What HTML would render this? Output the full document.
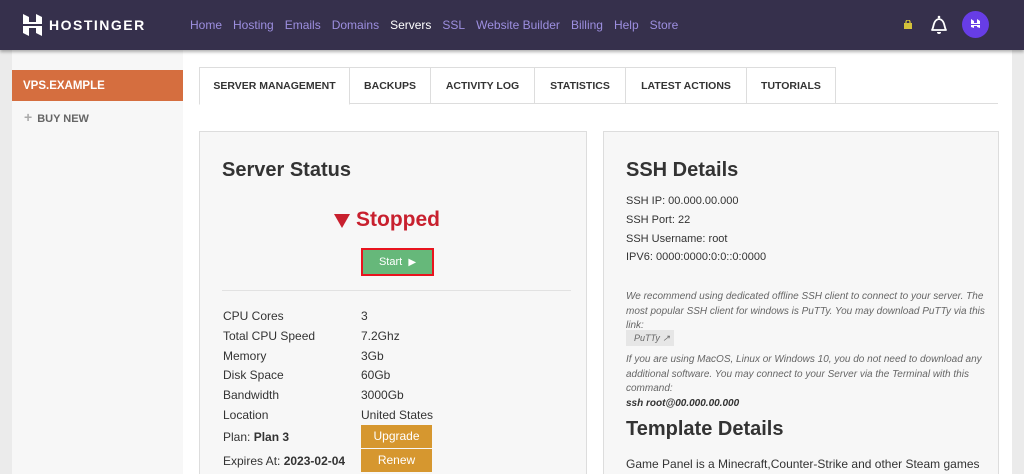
<!DOCTYPE html>
<html style="width:1024px;height:474px;overflow:hidden"><head><meta charset="utf-8"><style>
*{box-sizing:border-box;margin:0;padding:0}
body{width:1024px;height:474px;overflow:hidden;background:#ebebeb;font-family:"Liberation Sans",sans-serif;position:relative;color:#333}
.hdr{position:absolute;left:0;top:0;width:1024px;height:50px;background:#36304c;box-shadow:0 2px 3px rgba(0,0,0,.3);z-index:3}
.logo{position:absolute;left:23px;top:14px}
.brand{position:absolute;left:49px;top:17px;color:#fff;font-weight:bold;font-size:14px;letter-spacing:1.5px}
.nav{position:absolute;left:190px;top:18px;font-size:12px;color:#9d8fe0;white-space:nowrap}
.nav span{margin-right:11px}
.nav .on{color:#fff}
.side{position:absolute;left:12px;top:50px;width:171px;height:424px;background:#f7f7f7}
.vps{position:absolute;left:12px;top:70px;width:171px;height:31px;background:#d56e3f;color:#fff;font-weight:bold;font-size:11.5px;line-height:33px;padding-left:11px}
.vps:after{content:"";position:absolute;right:-5px;top:0;border-left:5px solid #d56e3f;border-top:15.5px solid transparent;border-bottom:15.5px solid transparent}
.buy{position:absolute;left:24px;top:109px;font-size:11px;font-weight:bold;color:#666}
.buy b{color:#aaa;font-size:14px;margin-right:5px}
.main{position:absolute;left:183px;top:50px;width:829px;height:424px;background:#fff;overflow:hidden}
.tabs{position:absolute;left:199px;top:67px;height:37px;width:799px;border-bottom:1px solid #ddd}
.tab{position:absolute;top:0;height:37px;border:1px solid #ddd;font-size:10.5px;font-weight:bold;color:#333;text-align:center;line-height:36px;background:#fff}
.tab.first{border-bottom-color:#fff;height:38px}
.panel{position:absolute;top:131px;background:#f7f7f7;border:1px solid #ddd;height:360px}
h2{position:absolute;font-size:20px;font-weight:bold;color:#333}
.row{position:absolute;left:23px;font-size:12px;color:#333}
.val{position:absolute;left:161px;font-size:12px;color:#333}
.btn{position:absolute;left:161px;width:71px;height:23px;background:#d6972f;color:#fff;font-size:12px;text-align:center;line-height:23px}
.t{position:absolute;left:22px;font-size:11px;color:#333}
.i{position:absolute;left:22px;font-size:10px;font-style:italic;color:#666;line-height:14.5px;width:360px}
</style></head><body>
<div class="hdr">
<svg class="logo" width="19" height="22" viewBox="0 0 19 22"><path d="M0 0l6 3v5l7 0V0l6 3v7H0z M0 12h19v10l-6-3v-5H6v8l-6-3z" fill="#fff"/></svg>
<div class="brand">HOSTINGER</div>
<div class="nav"><span>Home</span><span>Hosting</span><span>Emails</span><span>Domains</span><span class="on">Servers</span><span>SSL</span><span>Website Builder</span><span>Billing</span><span>Help</span><span>Store</span></div>
<svg style="position:absolute;left:904px;top:20px" width="8" height="9"><rect x="0" y="3" width="8" height="6" fill="#d4c23a"/><path d="M2 4V2a2 2 0 014 0v2" stroke="#d4c23a" fill="none" stroke-width="1.3"/></svg>
<svg style="position:absolute;left:929px;top:13px" width="20" height="23" viewBox="0 0 20 23"><path d="M3 17c2-3 1-10 7-11 6 1 5 8 7 11z" fill="none" stroke="#fff" stroke-width="1.8" stroke-linejoin="round"/><circle cx="10" cy="4" r="1.3" fill="#fff"/><path d="M8 19a2 2 0 004 0" fill="#fff"/></svg>
<div style="position:absolute;left:962px;top:11px;width:27px;height:27px;border-radius:50%;background:#673de6"><svg style="position:absolute;left:9px;top:8px" width="9" height="9"><path d="M0 0l3 2v2h3V0l3 2v3H0zM0 6h9v3l-3-1v-1H3v2L0 8z" fill="#fff"/></svg></div>
</div>
<div class="side"></div>
<div class="vps">VPS.EXAMPLE</div>
<div class="buy"><b>+</b>BUY NEW</div>
<div class="main">
<div style="position:absolute;left:-183px;top:-50px;width:1024px;height:474px">
<div class="tabs">
<div class="tab first" style="left:0;width:151px">SERVER MANAGEMENT</div>
<div class="tab" style="left:150px;width:82px">BACKUPS</div>
<div class="tab" style="left:231px;width:105px">ACTIVITY LOG</div>
<div class="tab" style="left:335px;width:92px">STATISTICS</div>
<div class="tab" style="left:426px;width:122px">LATEST ACTIONS</div>
<div class="tab" style="left:547px;width:90px">TUTORIALS</div>
</div>
<div class="panel" style="left:199px;width:388px">
<h2 style="left:22px;top:27px">Server Status</h2>
<svg style="position:absolute;left:134px;top:82px" width="16" height="14"><path d="M0 0h16L8 14z" fill="#c8202e"/></svg>
<div style="position:absolute;left:156px;top:76px;color:#c8202e;font-size:21px;font-weight:bold">Stopped</div>
<div style="position:absolute;left:161px;top:116px;width:73px;height:28px;border:2px solid #e8141e;background:#66b87a;color:#fff;font-size:11px;text-align:center;line-height:24px">Start &nbsp;<span style="font-size:10px">&#9654;</span></div>
<div style="position:absolute;left:22px;top:158px;width:349px;height:1px;background:#e2e2e2"></div>
<div class="row" style="top:177px">CPU Cores</div><div class="val" style="top:177px">3</div>
<div class="row" style="top:197px">Total CPU Speed</div><div class="val" style="top:197px">7.2Ghz</div>
<div class="row" style="top:217px">Memory</div><div class="val" style="top:217px">3Gb</div>
<div class="row" style="top:236px">Disk Space</div><div class="val" style="top:236px">60Gb</div>
<div class="row" style="top:256px">Bandwidth</div><div class="val" style="top:256px">3000Gb</div>
<div class="row" style="top:276px">Location</div><div class="val" style="top:276px">United States</div>
<div class="row" style="top:298px">Plan: <b>Plan 3</b></div><div class="btn" style="top:293px">Upgrade</div>
<div class="row" style="top:322px">Expires At: <b>2023-02-04</b></div><div class="btn" style="top:317px">Renew</div>
</div>
<div class="panel" style="left:603px;width:396px">
<h2 style="left:22px;top:27px">SSH Details</h2>
<div class="t" style="top:63px">SSH IP: 00.000.00.000</div>
<div class="t" style="top:82px">SSH Port: 22</div>
<div class="t" style="top:101px">SSH Username: root</div>
<div class="t" style="top:119px">IPV6: 0000:0000:0:0::0:0000</div>
<div class="i" style="top:158px">We recommend using dedicated offline SSH client to connect to your server. The most popular SSH client for windows is PuTTy. You may download PuTTy via this link:</div>
<div style="position:absolute;left:22px;top:198px;width:48px;height:16px;background:#e6e6e6;font-size:9px;font-style:italic;color:#666;line-height:16px;padding-left:8px">PuTTy &#8599;</div>
<div class="i" style="top:221px">If you are using MacOS, Linux or Windows 10, you do not need to download any additional software. You may connect to your Server via the Terminal with this command:<br><b style="color:#333">ssh root@00.000.00.000</b></div>
<h2 style="left:22px;top:286px">Template Details</h2>
<div class="t" style="top:325px;font-size:12px">Game Panel is a Minecraft,Counter-Strike and other Steam games</div>
</div>
</div>
</div>
</body></html>
